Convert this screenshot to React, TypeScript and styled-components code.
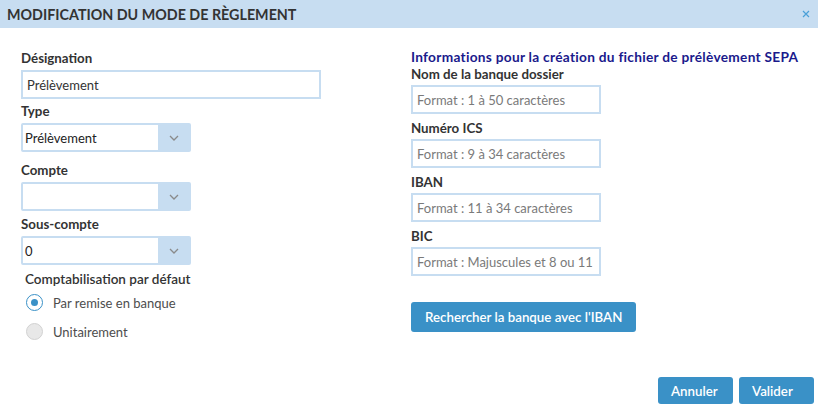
import React, { useState } from 'react';
import styled, { createGlobalStyle } from 'styled-components';

const GlobalStyle = createGlobalStyle`
  html, body {
    margin: 0;
    padding: 0;
    background: #ffffff;
  }
  body {
    font-family: 'Lato', 'Liberation Sans', sans-serif;
    font-size: 13px;
    color: #333333;
  }
`;

const Dialog = styled.div`
  width: 818px;
  height: 408px;
  display: flex;
  flex-direction: column;
  background: #ffffff;
  box-sizing: border-box;
`;

const Header = styled.div`
  height: 28px;
  flex-shrink: 0;
  display: flex;
  align-items: center;
  justify-content: space-between;
  padding: 0 5px 0 7px;
  background: #c7ddf1;
`;

const HeaderTitle = styled.span`
  font-size: 14.3px;
  font-weight: 700;
  color: #333333;
  text-transform: uppercase;
`;

const CloseButton = styled.button`
  border: none;
  background: none;
  padding: 0;
  width: 14px;
  height: 14px;
  display: flex;
  align-items: center;
  justify-content: center;
  cursor: pointer;
`;

const Body = styled.div`
  flex: 1;
  display: grid;
  grid-template-columns: 390px 1fr;
  padding: 21px 0 0 21px;
`;

const Column = styled.div`
  display: flex;
  flex-direction: column;
  align-items: flex-start;
`;

const Label = styled.label<{ $top?: number; $bottom?: number }>`
  display: block;
  font-weight: 700;
  font-size: 13.3px;
  line-height: 18px;
  color: #333333;
  margin-top: ${(p) => p.$top ?? 3}px;
  margin-bottom: ${(p) => p.$bottom ?? 3}px;
`;

const SectionTitle = styled.div`
  font-weight: 700;
  font-size: 13.7px;
  letter-spacing: 0.28px;
  line-height: 16px;
  color: #1a1a8c;
`;

const TextInput = styled.input<{ $width: number }>`
  box-sizing: border-box;
  width: ${(p) => p.$width}px;
  height: 29px;
  border: 2px solid #c7ddf1;
  padding: 0 4px;
  font-family: inherit;
  font-size: 13px;
  color: #333333;
  outline: none;
  background: #ffffff;

  &::placeholder {
    color: #7a7a7a;
  }
`;

const SelectBox = styled.div`
  box-sizing: border-box;
  width: 170px;
  height: 29px;
  display: flex;
  border: 2px solid #c7ddf1;
  border-radius: 2px;
  background: #ffffff;
`;

const SelectValue = styled.div`
  flex: 1;
  display: flex;
  align-items: center;
  padding: 0 2px;
  color: #222222;
`;

const SelectArrow = styled.div`
  width: 31px;
  display: flex;
  align-items: center;
  justify-content: center;
  background: #c7ddf1;
`;

const GroupTitle = styled.div`
  margin: 5px 0 0 4px;
  line-height: 18px;
  font-size: 13.5px;
  font-weight: 600;
  color: #333333;
`;

const RadioRow = styled.label`
  display: flex;
  align-items: center;
  gap: 10px;
  height: 29px;
  margin-left: 5px;
  color: #4d4d4d;
  cursor: pointer;
`;

const RadioDot = styled.span<{ $checked: boolean }>`
  box-sizing: border-box;
  width: 17px;
  height: 17px;
  border-radius: 50%;
  display: flex;
  align-items: center;
  justify-content: center;
  border: ${(p) => (p.$checked ? '1.5px solid #3a91c7' : '1px solid #d2d2d2')};
  background: ${(p) => (p.$checked ? '#ffffff' : '#e8e8e8')};

  &::after {
    content: '';
    width: 7px;
    height: 7px;
    border-radius: 50%;
    background: ${(p) => (p.$checked ? '#3a91c7' : 'transparent')};
  }
`;

const PrimaryButton = styled.button<{ $width?: number }>`
  box-sizing: border-box;
  height: 30px;
  width: ${(p) => (p.$width ? `${p.$width}px` : 'auto')};
  padding: 0 14px;
  border: none;
  border-radius: 3px;
  background: #3a91c7;
  color: #ffffff;
  font-family: inherit;
  font-size: 13.3px;
  font-weight: 600;
  text-align: left;
  cursor: pointer;
`;

const SearchButton = styled(PrimaryButton)`
  margin-top: 26px;
`;

const Footer = styled.div`
  display: flex;
  justify-content: flex-end;
  gap: 6px;
  padding: 0 4px 4px 0;
`;

const FooterButton = styled(PrimaryButton)`
  height: 27px;
  padding: 0 13px;
`;

const Chevron = () => (
  <svg width="10" height="6" viewBox="0 0 10 6">
    <path d="M1 1 L5 5 L9 1" fill="none" stroke="#8a8a8a" strokeWidth="1.3" />
  </svg>
);

const Select = ({ value }: { value: string }) => (
  <SelectBox>
    <SelectValue>{value}</SelectValue>
    <SelectArrow>
      <Chevron />
    </SelectArrow>
  </SelectBox>
);

const App = () => {
  const [mode, setMode] = useState('remise');

  return (
    <>
      <GlobalStyle />
      <Dialog>
        <Header>
          <HeaderTitle>Modification du mode de règlement</HeaderTitle>
          <CloseButton aria-label="Fermer">
            <svg width="8" height="8" viewBox="0 0 8 8">
              <path d="M1 1 L7 7 M7 1 L1 7" stroke="#4aa0d8" strokeWidth="1.2" />
            </svg>
          </CloseButton>
        </Header>

        <Body>
          <Column>
            <Label $top={0}>Désignation</Label>
            <TextInput $width={300} defaultValue="Prélèvement" />
            <Label>Type</Label>
            <Select value="Prélèvement" />
            <Label $top={9}>Compte</Label>
            <Select value="" />
            <Label $top={4}>Sous-compte</Label>
            <Select value="0" />
            <GroupTitle>Comptabilisation par défaut</GroupTitle>
            <RadioRow onClick={() => setMode('remise')}>
              <RadioDot $checked={mode === 'remise'} />
              Par remise en banque
            </RadioRow>
            <RadioRow onClick={() => setMode('unitaire')}>
              <RadioDot $checked={mode === 'unitaire'} />
              Unitairement
            </RadioRow>
          </Column>

          <Column>
            <SectionTitle>Informations pour la création du fichier de prélèvement SEPA</SectionTitle>
            <Label $top={0} $bottom={2}>Nom de la banque dossier</Label>
            <TextInput $width={190} placeholder="Format : 1 à 50 caractères" />
            <Label $top={5} $bottom={2}>Numéro ICS</Label>
            <TextInput $width={190} placeholder="Format : 9 à 34 caractères" />
            <Label $top={5} $bottom={2}>IBAN</Label>
            <TextInput $width={190} placeholder="Format : 11 à 34 caractères" />
            <Label $top={5} $bottom={2}>BIC</Label>
            <TextInput $width={190} placeholder="Format : Majuscules et 8 ou 11" />
            <SearchButton>Rechercher la banque avec l'IBAN</SearchButton>
          </Column>
        </Body>

        <Footer>
          <FooterButton $width={75}>Annuler</FooterButton>
          <FooterButton $width={75}>Valider</FooterButton>
        </Footer>
      </Dialog>
    </>
  );
};

export default App;
